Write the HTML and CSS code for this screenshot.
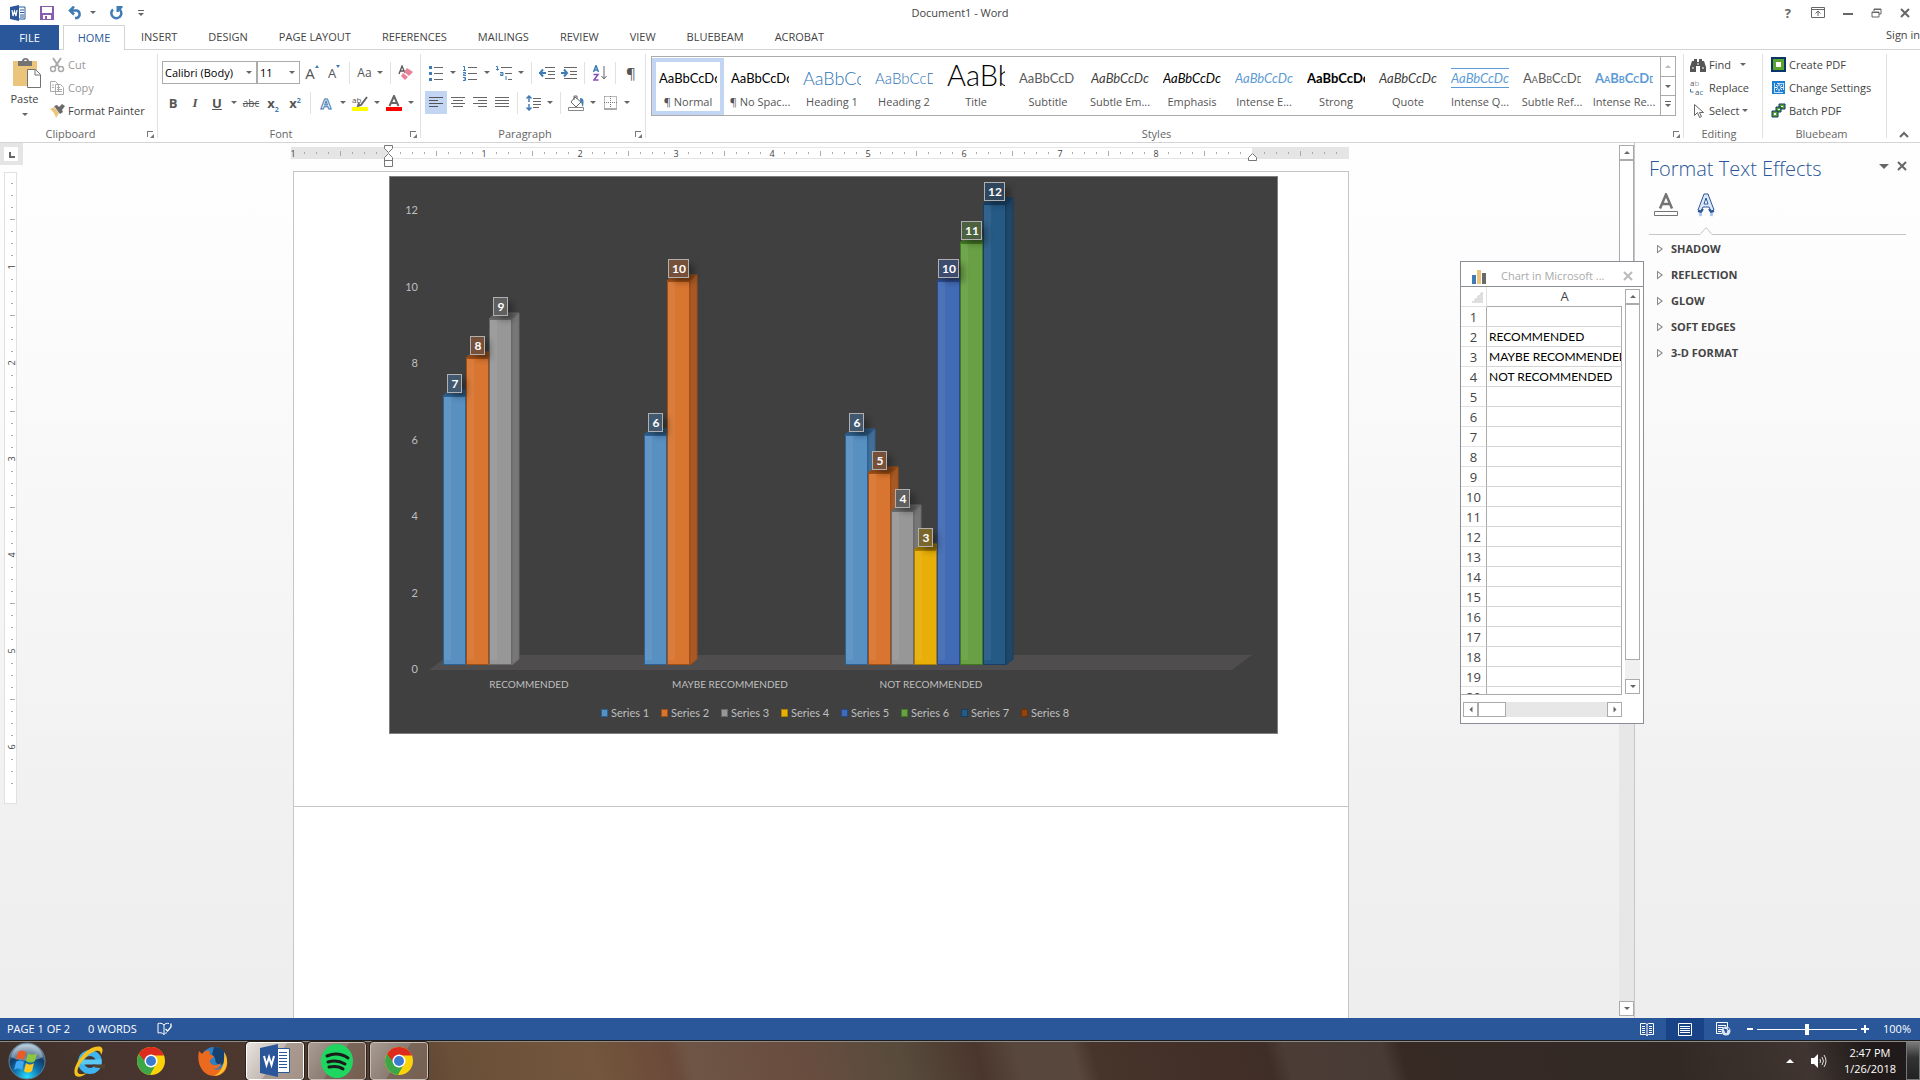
FILE: index.html
```
<!DOCTYPE html>
<html lang="en">
<head>
  <meta charset="UTF-8" />
  <title>Document1 - Word</title>
  <link rel="stylesheet" href="styles.css">
</head>
<body>
  <header class="titlebar">
    <div class="quick">
      <svg class="q-word" width="16" height="16" viewBox="0 0 16 16"><path d="M8 2h7v12H8" fill="#fff" stroke="#2a579a"/><path d="M10 5h4M10 7.500h4M10 10h4M10 12h4" stroke="#2a579a"/><path d="M0 2l9-2v16l-9-2z" fill="#2a579a"/><path d="M2 5l1 6 1.500-5L6 11l1-6" fill="none" stroke="#fff" stroke-width="1.200"/></svg>
      <button class="q-btn" aria-label="Save"><svg width="14" height="14" viewBox="0 0 14 14"><path d="M0 0h14v14H0z" fill="#8a5cb0"/><path d="M2 1h10v6H2zM3 9h8v4H3z" fill="#fff"/><path d="M5 10h2v4H5z" fill="#8a5cb0"/></svg></button>
      <button class="q-btn" aria-label="Undo"><svg width="15" height="14" viewBox="0 0 15 14"><path d="M1.500 4.500H9a4 4 0 0 1 0 7.500H7M6 .5l-4 4 4 4" fill="none" stroke="#3f7cb5" stroke-width="2.500"/></svg></button>
      <i class="arrow"></i>
      <button class="q-btn" aria-label="Redo"><svg width="15" height="14" viewBox="0 0 15 14"><path d="M9 2.500a5 5 0 1 1-5 1" fill="none" stroke="#3f7cb5" stroke-width="2.400"/><path d="M7.500 0h6v1.500L9.500 6h-2z" fill="#3f7cb5"/></svg></button>
      <button class="q-more" aria-label="Customize"><svg width="6" height="6" viewBox="0 0 6 6"><path d="M0 .5h6" stroke="#666"/><path d="M0 3h6L3 6z" fill="#666"/></svg></button>
    </div>
    <h1>Document1 - Word</h1>
    <div class="win-btns">
      <button aria-label="Help" class="help">?</button>
      <button aria-label="Ribbon display"><svg width="14" height="11" viewBox="0 0 14 11"><path d="M.5.5h13v10H.5zM1 2.500h12M7 9V4.500M4.500 6.500L7 4l2.500 2.500" fill="none" stroke="#666"/></svg></button>
      <button aria-label="Minimize"><svg width="10" height="11" viewBox="0 0 10 11"><path d="M0 7h10" stroke="#666" stroke-width="2"/></svg></button>
      <button aria-label="Restore"><svg width="11" height="10" viewBox="0 0 11 10"><path d="M3 3V1h7v5H8M1 4h7v5H1z" fill="none" stroke="#666"/><path d="M1 4.500h7M3 1.500h7" stroke="#666"/></svg></button>
      <button aria-label="Close"><svg width="10" height="10" viewBox="0 0 10 10"><path d="M1 1l8 8M9 1L1 9" stroke="#666" stroke-width="2"/></svg></button>
    </div>
  </header>

  <nav class="tabs">
    <button class="tab file">FILE</button>
    <button class="tab active">HOME</button>
    <button class="tab">INSERT</button>
    <button class="tab">DESIGN</button>
    <button class="tab">PAGE LAYOUT</button>
    <button class="tab">REFERENCES</button>
    <button class="tab">MAILINGS</button>
    <button class="tab">REVIEW</button>
    <button class="tab">VIEW</button>
    <button class="tab">BLUEBEAM</button>
    <button class="tab">ACROBAT</button>
    <a class="signin" href="#">Sign in</a>
  </nav>

  <section class="ribbon">
    <div class="group clipboard">
      <div class="content">
        <button class="paste">
          <svg width="30" height="31" viewBox="0 0 30 31"><path d="M1 3h24v25H1z" fill="#ecc57c"/><path d="M6 3h4c0-4 7-4 7 0h3v5H6z" fill="#737373"/><path d="M12 3a1.500 1.500 0 0 1 3 0" fill="#fff"/><path d="M15.500 11.500h8l5 5v13h-13z" fill="#fff" stroke="#737373"/><path d="M23 12v5h5" fill="none" stroke="#737373"/></svg>
          <span>Paste</span>
          <i class="arrow"></i>
        </button>
        <div class="list">
          <button class="item off"><svg width="16" height="16" viewBox="0 0 16 16"><path d="M4 1l6 9M12 1L6 10" stroke="#aaa" stroke-width="2"/><circle cx="4" cy="12" r="2.500" fill="none" stroke="#aaa" stroke-width="1.500"/><circle cx="12" cy="12" r="2.500" fill="none" stroke="#aaa" stroke-width="1.500"/></svg>Cut</button>
          <button class="item off"><svg width="16" height="16" viewBox="0 0 16 16"><path d="M1.500 1.500h5l3 3v7h-8zM6.500 4.500h5l3 3v7h-8z" fill="#fff" stroke="#aaa"/><path d="M3 5h2M3 7.500h2M8 9.500h5M8 11.500h5M8 7.500h3" stroke="#aaa"/></svg>Copy</button>
          <button class="item"><svg width="16" height="16" viewBox="0 0 16 16"><path d="M1 6l4-2 5 6-3 5c-1-4-3-7-6-9z" fill="#ecc57c"/><path d="M5 3l3-1 2 2 3-3 3 2-3 4 1 2-3 2z" fill="#6a6a6a"/></svg>Format Painter</button>
        </div>
      </div>
      <div class="label">Clipboard<i class="launch"></i></div>
    </div>

    <div class="group font">
      <div class="content rows">
        <div class="row">
          <span class="combo name"><select aria-label="Font"><option>Calibri (Body)</option></select><i class="arrow"></i></span>
          <span class="combo size"><select aria-label="Font size"><option>11</option></select><i class="arrow"></i></span>
          <button class="ib gap" aria-label="Grow font"><span class="g16">A</span><i class="up"></i></button>
          <button class="ib" aria-label="Shrink font"><span class="g14">A</span><i class="down"></i></button>
          <i class="sep"></i>
          <button class="ib wide"><span class="g13">Aa</span><i class="arrow"></i></button>
          <i class="sep"></i>
          <button class="ib" aria-label="Clear formatting"><svg width="16" height="16" viewBox="0 0 16 16"><path d="M1 9l3-8 3 7M2 6h4" fill="none" stroke="#555" stroke-width="1.300"/><path d="M9 3l6 4-4 4-5-4z" fill="#e8829a"/><path d="M5 8l5 4-3 3-4-4z" fill="#e8829a"/></svg></button>
        </div>
        <div class="row">
          <button class="ib"><b>B</b></button>
          <button class="ib"><b class="ital">I</b></button>
          <button class="ib"><b class="und">U</b></button>
          <i class="arrow cell"></i>
          <button class="ib"><s>abc</s></button>
          <button class="ib"><b>x<sub>2</sub></b></button>
          <button class="ib"><b>x<sup>2</sup></b></button>
          <i class="sep"></i>
          <button class="ib"><b class="fx">A</b></button><i class="arrow cell"></i>
          <button class="ib" aria-label="Highlight"><svg width="16" height="16" viewBox="0 0 16 16"><text x="0" y="8" class="ab">ab</text><path d="M15 2l-6 8-3 1 1-3" fill="none" stroke="#666" stroke-width="2"/><path d="M0 12h16v4H0z" fill="#ff0"/></svg></button><i class="arrow cell"></i>
          <button class="ib" aria-label="Font colour"><svg width="16" height="16" viewBox="0 0 16 16"><path d="M3.500 11L8 1l4.500 10M5 8h6" fill="none" stroke="#666" stroke-width="2"/><path d="M0 12h16v4H0z" fill="red"/></svg></button><i class="arrow cell"></i>
        </div>
      </div>
      <div class="label">Font<i class="launch"></i></div>
    </div>

    <div class="group para">
      <div class="content rows">
        <div class="row">
          <button class="ib" aria-label="Bullets"><svg width="14" height="16" viewBox="0 0 14 16"><path d="M0 1h3v3H0zM0 7h3v3H0zM0 13h3v3H0z" fill="#3f7cb5"/><path d="M5 2.500h9M5 8.500h9M5 14.500h9" stroke="#666"/></svg></button><i class="arrow cell"></i>
          <button class="ib" aria-label="Numbering"><svg width="14" height="16" viewBox="0 0 14 16"><path d="M0 1.500h1.500v4M0 5.500h3M0 7.500h2.500v1.500H.5v1.500H3M0 12.500h2.500v3H0M1 14h1.500" fill="none" stroke="#3f7cb5"/><path d="M5 2.500h9M5 8.500h9M5 14.500h9" stroke="#666"/></svg></button><i class="arrow cell"></i>
          <button class="ib" aria-label="Multilevel list"><svg width="16" height="16" viewBox="0 0 16 16"><path d="M0 1.500h1.500v4M0 4.500h3M4 7.500h3v3H4.500V9H7M10 11v4" fill="none" stroke="#3f7cb5"/><path d="M5 2.500h11M9 8.500h7M12 14.500h4" stroke="#666"/></svg></button><i class="arrow cell"></i>
          <i class="sep"></i>
          <button class="ib" aria-label="Decrease indent"><svg width="16" height="12" viewBox="0 0 16 12"><path d="M0 6h7M4 2.500L1 6l3 3.500" fill="none" stroke="#3f7cb5" stroke-width="2"/><path d="M6 .5h10M9 4.500h7M9 7.500h7M6 11.500h10" stroke="#666"/></svg></button>
          <button class="ib" aria-label="Increase indent"><svg width="16" height="12" viewBox="0 0 16 12"><path d="M0 6h6M3 2.500L6 6 3 9.500" fill="none" stroke="#3f7cb5" stroke-width="2"/><path d="M3 .5h13M9 4.500h7M9 7.500h7M3 11.500h13" stroke="#666"/></svg></button>
          <i class="sep"></i>
          <button class="ib" aria-label="Sort"><svg width="14" height="16" viewBox="0 0 14 16"><path d="M.5 7L3 .5 5.500 7M1.500 5h3" fill="none" stroke="#3f7cb5" stroke-width="1.500"/><path d="M.5 9.500H5L1 15h4.500" fill="none" stroke="#8a4fb5" stroke-width="1.500"/><path d="M11 1v12M8.500 11l2.500 3 2.500-3" fill="none" stroke="#666"/></svg></button>
          <i class="sep"></i>
          <button class="ib"><span class="g16">¶</span></button>
        </div>
        <div class="row">
          <button class="ib on" aria-label="Align left"><svg width="14" height="11" viewBox="0 0 14 11"><path d="M0 .5h14M0 3.500h9M0 6.500h14M0 9.500h9" stroke="#555"/></svg></button>
          <button class="ib" aria-label="Center"><svg width="14" height="11" viewBox="0 0 14 11"><path d="M0 .5h14M2 3.500h10M0 6.500h14M2 9.500h10" stroke="#666"/></svg></button>
          <button class="ib" aria-label="Align right"><svg width="14" height="11" viewBox="0 0 14 11"><path d="M0 .5h14M5 3.500h9M0 6.500h14M5 9.500h9" stroke="#666"/></svg></button>
          <button class="ib" aria-label="Justify"><svg width="14" height="11" viewBox="0 0 14 11"><path d="M0 .5h14M0 3.500h14M0 6.500h14M0 9.500h14" stroke="#666"/></svg></button>
          <i class="sep"></i>
          <button class="ib" aria-label="Line spacing"><svg width="15" height="16" viewBox="0 0 15 16"><path d="M3 1v6M3 9v6M.5 3.500L3 1l2.500 2.500M.5 12.500L3 15l2.500-2.500" fill="none" stroke="#3f7cb5" stroke-width="1.500"/><path d="M7 3.500h8M7 6.500h8M7 9.500h8M7 12.500h6" stroke="#666"/></svg></button><i class="arrow cell"></i>
          <i class="sep"></i>
          <button class="ib" aria-label="Shading"><svg width="17" height="16" viewBox="0 0 17 16"><path d="M7 2l6 5-5 5-5-5zM6 5V1h3v3" fill="none" stroke="#666"/><path d="M12 3c4 0 4 3 3 9-2-2-1-5-3-7z" fill="#3f7cb5"/><path d="M.5 12.500h15v3H.5z" fill="#fff" stroke="#888"/></svg></button><i class="arrow cell"></i>
          <button class="ib" aria-label="Borders"><svg width="13" height="14" viewBox="0 0 13 14"><path d="M.5.5h12v12M.5.5v12M6.500 0v12M0 6.500h13" fill="none" stroke="#777" stroke-dasharray="1 1"/><path d="M0 13h13" stroke="#555"/></svg></button><i class="arrow cell"></i>
        </div>
      </div>
      <div class="label">Paragraph<i class="launch"></i></div>
    </div>

    <div class="group styles">
      <div class="gallery">
        <div class="cards">
          <button class="card sel"><span class="pv">AaBbCcDc</span><span>¶ Normal</span></button>
          <button class="card"><span class="pv">AaBbCcDc</span><span>¶ No Spac...</span></button>
          <button class="card"><span class="pv h1p">AaBbCc</span><span>Heading 1</span></button>
          <button class="card"><span class="pv h2p">AaBbCcD</span><span>Heading 2</span></button>
          <button class="card"><span class="pv tp">AaBb</span><span>Title</span></button>
          <button class="card"><span class="pv subp">AaBbCcD</span><span>Subtitle</span></button>
          <button class="card"><span class="pv it">AaBbCcDc</span><span>Subtle Em...</span></button>
          <button class="card"><span class="pv it dark">AaBbCcDc</span><span>Emphasis</span></button>
          <button class="card"><span class="pv it blue">AaBbCcDc</span><span>Intense E...</span></button>
          <button class="card"><span class="pv bold">AaBbCcDc</span><span>Strong</span></button>
          <button class="card"><span class="pv it">AaBbCcDc</span><span>Quote</span></button>
          <button class="card"><span class="pv it blue lines">AaBbCcDc</span><span>Intense Q...</span></button>
          <button class="card"><span class="pv caps">AaBbCcDd</span><span>Subtle Ref...</span></button>
          <button class="card"><span class="pv caps blue bold">AaBbCcDd</span><span>Intense Re...</span></button>
        </div>
        <div class="gal-nav">
          <button aria-label="Previous row"><i class="arrow flip dim"></i></button>
          <button aria-label="Next row"><i class="arrow"></i></button>
          <button aria-label="More"><i class="arrow bar"></i></button>
        </div>
      </div>
      <div class="label">Styles<i class="launch"></i></div>
    </div>

    <div class="group editing">
      <div class="content list">
        <button class="item"><svg width="16" height="14" viewBox="0 0 16 14"><path d="M2 3h2V1h3v3h2V1h3v2h2l2 6v5h-6V8H6v6H0V9z" fill="#555"/><path d="M2 10h2M12 10h2M7 6h2" stroke="#fff"/></svg>Find<i class="arrow far"></i></button>
        <button class="item"><svg width="16" height="16" viewBox="0 0 16 16"><text x="0" y="6" class="ab">a<tspan fill="#aaa">b</tspan></text><text x="5" y="15" class="ab">a<tspan fill="#3f7cb5">c</tspan></text><path d="M.5 9v3h3" fill="none" stroke="#3f7cb5"/></svg>Replace</button>
        <button class="item"><svg width="16" height="16" viewBox="0 0 16 16"><path d="M4.500 1.500v11l3-3 2 5 2-1-2-4h4z" fill="#fff" stroke="#666"/></svg>Select<i class="arrow"></i></button>
      </div>
      <div class="label">Editing</div>
    </div>

    <div class="group bluebeam">
      <div class="content list">
        <button class="item"><svg width="15" height="15" viewBox="0 0 15 15"><path d="M0 0h15v15H0z" fill="#0b3468"/><path d="M2 2h11v11H2z" fill="#5aa52e"/><path d="M5 5h5v5H5z" fill="#fff"/></svg>Create PDF</button>
        <button class="item"><svg width="15" height="15" viewBox="0 0 15 15"><path d="M1 1h13v13H1z" fill="#1e7fd0"/><path d="M3.500 3v9M3 12.500h9M6 3.500h6M12.500 3v7" stroke="#bfe0ff" fill="none"/><path d="M8 3.500v8M4 7.500h8M5 5l6 5M11 5l-6 5" stroke="#fff"/><circle cx="8" cy="7.500" r="1.500" fill="#1e7fd0"/></svg>Change Settings</button>
        <button class="item"><svg width="15" height="15" viewBox="0 0 15 15"><g fill="#fff" stroke="#0b3468"><path d="M8 1h6v5H8z" fill="#5aa52e"/><path d="M5 4h5v5H5z" fill="#5aa52e"/><path d="M1 8h6v6H1z" fill="#5aa52e"/></g><path d="M3 10h2v2H3zM7 6h2v1H7zM10 3h2v1h-2z" fill="#fff"/></svg>Batch PDF</button>
      </div>
      <div class="label">Bluebeam</div>
    </div>
    <div class="collapse"><button aria-label="Collapse ribbon"><svg width="10" height="7" viewBox="0 0 10 7"><path d="M1 6l4-4 4 4" fill="none" stroke="#666" stroke-width="2"/></svg></button></div>
  </section>

  <main class="work">
    <div class="vside">
      <button class="tabsel" aria-label="Tab selector"><svg width="14" height="14" viewBox="0 0 14 14"><path d="M0 0h14v14H0z" fill="#fff"/><path d="M6 5v5h5" fill="none" stroke="#666" stroke-width="2"/></svg></button>
      <svg id="vruler" width="13" height="632"></svg>
    </div>
    <div class="canvas">
      <svg id="hruler" width="1060" height="28"></svg>
      <div class="page first">
        <svg id="chart" width="889" height="558" viewBox="389 176 889 558" role="img" aria-label="Chart"></svg>
      </div>
      <div class="page rest"></div>
    </div>
    <div class="vscroll">
      <button aria-label="Scroll up"><i class="arrow flip"></i></button>
      <div class="thumb"></div>
      <button class="end" aria-label="Scroll down"><i class="arrow"></i></button>
    </div>

    <aside class="pane">
      <div class="pane-head">
        <h2>Format Text Effects</h2>
        <button aria-label="Pane options"><i class="arrow big"></i></button>
        <button aria-label="Close pane"><svg width="10" height="10" viewBox="0 0 10 10"><path d="M1 1l8 8M9 1L1 9" stroke="#666" stroke-width="2"/></svg></button>
      </div>
      <div class="pane-tabs">
        <button aria-label="Text fill and outline"><svg width="24" height="24" viewBox="0 0 24 24"><path d="M6 15.500L12 1.500l6 14M8 11h8" fill="none" stroke="#737373" stroke-width="2.500"/><path d="M.5 18.500h23v4H.5z" fill="#fff" stroke="#737373"/></svg></button>
        <button aria-label="Text effects"><svg width="18" height="24" viewBox="0 0 18 24"><path d="M1 17L7 1h4l6 16-3 1-2-4H6l-2 4zM9 5l-2 6h4z" fill="#dce8f8" stroke="#2a579a"/><path d="M1 18l3 1 2-3M17 18l-3 1-2-3" fill="none" stroke="#2a579a" stroke-width="2"/><path d="M3 20l1 3M15 20l-1 3" stroke="#a9c4e8" stroke-width="3"/></svg></button>
      </div>
      <svg class="notch" width="100%" height="9"><path d="M0 8.500h51l6-7 6 7" fill="none" stroke="#c6c6c6"/><path d="M63 8.500h194" stroke="#c6c6c6"/></svg>
      <div class="sections">
        <button><i class="tri"></i>SHADOW</button>
        <button><i class="tri"></i>REFLECTION</button>
        <button><i class="tri"></i>GLOW</button>
        <button><i class="tri"></i>SOFT EDGES</button>
        <button><i class="tri"></i>3-D FORMAT</button>
      </div>
    </aside>

    <div class="sheet">
      <div class="sheet-title">
        <svg width="15" height="15" viewBox="0 0 15 15"><path d="M0 6h4v9H0z" fill="#3f7cb5"/><path d="M5 1h4v14H5z" fill="#ecc57c"/><path d="M10 4h4v11h-4z" fill="#6a6a6a"/></svg>
        <span>Chart in Microsoft ...</span>
        <button aria-label="Close chart data"><svg width="10" height="10" viewBox="0 0 10 10"><path d="M1 1l8 8M9 1L1 9" stroke="#bbb" stroke-width="2"/></svg></button>
      </div>
      <div class="sheet-body">
        <div class="cells">
          <table>
            <thead><tr><th class="corner"></th><th class="col">A</th></tr></thead>
            <tbody id="rows"></tbody>
          </table>
        </div>
        <div class="vscroll small">
          <button aria-label="Scroll up"><i class="arrow flip"></i></button>
          <div class="thumb"></div>
          <button class="end" aria-label="Scroll down"><i class="arrow"></i></button>
        </div>
      </div>
      <div class="hscroll">
        <button aria-label="Scroll left"><i class="arrow left"></i></button>
        <div class="thumb"></div>
        <button class="end" aria-label="Scroll right"><i class="arrow right"></i></button>
      </div>
    </div>
  </main>

  <footer class="status">
    <span>PAGE 1 OF 2</span>
    <span>0 WORDS</span>
    <svg width="15" height="14" viewBox="0 0 15 14"><path d="M7 12.500V3C5 1 3 1 1 1.500v9.500c2-.5 4-.5 6 1.500 1-1.500 2-1.700 3-1.700M7 3c1-1.500 3-2 5-1.500" fill="none" stroke="#fff"/><path d="M8.500 7l2 2 3.500-4V1.500" fill="none" stroke="#fff" stroke-width="1.300"/></svg>
    <div class="views">
      <button aria-label="Read mode"><svg width="14" height="13" viewBox="0 0 14 13"><path d="M.5.5h5l1.500 1 1.500-1h5v11h-5L7 12.500 5.500 11.500h-5zM7 1v12M2 3.500h3M2 5.500h3M2 7.500h3M2 9.500h3M9 3.500h3M9 5.500h3M9 7.500h3M9 9.500h3" fill="none" stroke="#fff"/></svg></button>
      <button class="on" aria-label="Print layout"><svg width="14" height="13" viewBox="0 0 14 13"><path d="M.5.5h13v12H.5zM2 3.500h10M2 5.500h10M2 7.500h10M2 9.500h10" fill="none" stroke="#fff"/></svg></button>
      <button aria-label="Web layout"><svg width="15" height="14" viewBox="0 0 15 14"><path d="M6 11.500H.5V.5h11V5M2 3.500h8M2 5.500h5M2 7.500h4M2 9.500h3" fill="none" stroke="#fff"/><circle cx="10" cy="9" r="4.500" fill="#dce6f5"/><path d="M8 7l3 1-1 3zM12 6l1 2" fill="#2a579a" stroke="#2a579a"/></svg></button>
    </div>
    <div class="zoom">
      <button aria-label="Zoom out"><svg width="6" height="10" viewBox="0 0 6 10"><path d="M0 5h6" stroke="#fff" stroke-width="2"/></svg></button>
      <input type="range" min="0" max="100" value="50" aria-label="Zoom">
      <button aria-label="Zoom in"><svg width="8" height="10" viewBox="0 0 8 10"><path d="M0 5h8M4 1v8" stroke="#fff" stroke-width="2"/></svg></button>
      <span>100%</span>
    </div>
  </footer>

  <div class="taskbar">
    <button class="task start" aria-label="Start"><svg width="38" height="38" viewBox="0 0 38 38">
      <defs><radialGradient id="orb" cx=".5" cy=".95" r=".9"><stop offset="0" stop-color="#27e0ff"/><stop offset=".4" stop-color="#1273ad"/><stop offset=".7" stop-color="#0f3c66"/><stop offset="1" stop-color="#9db6c8"/></radialGradient></defs>
      <circle cx="19" cy="19" r="18" fill="url(#orb)" stroke="#5f7f96"/>
      <path d="M3 15a16.500 16.500 0 0 1 32 0c-9 5-23 5-32 0z" fill="#fff" opacity=".35"/>
      <path d="M10 10c3-2 5-2 8 0l-2 8c-3-2-5-2-8 0z" fill="#ee5a24"/><path d="M20 11c3 2 6 2 9 0l-2 8c-3 2-6 2-9 0z" fill="#8cc63f"/><path d="M8 20c3-2 5-2 8 0l-2 8c-3-2-5-2-8 0z" fill="#3fa9f5"/><path d="M18 21c3 2 5 2 8 0l-2 8c-3 2-5 2-8 0z" fill="#ffc81e"/></svg></button>
    <button class="task" aria-label="Internet Explorer"><svg width="32" height="34" viewBox="0 0 32 34"><circle cx="17" cy="18" r="9" fill="none" stroke="#3fb4ee" stroke-width="6"/><path d="M8 15.500h20v5H8z" fill="#5cc8f5"/><path d="M20 20.500h12v4l-10-1z" fill="#54402f"/><path d="M3 32C-4 26 14-1 28 3c3 2 1 6 0 8 0-4-2-5-6-4C12 11 2 25 5 29c2 2 6 1 9 0-4 3-8 5-11 3z" fill="#f6c31c"/></svg></button>
    <button class="task" aria-label="Chrome"><svg width="30" height="30" viewBox="0 0 30 30"><circle cx="15" cy="15" r="14" fill="#fcd209"/><path d="M2.900 8A14 14 0 0 1 28 9.500H15L9 18z" fill="#dd2c1e"/><path d="M2.900 8A14 14 0 0 0 14 29l6-11h-9z" fill="#3da648"/><circle cx="15" cy="15" r="6.500" fill="#fff"/><circle cx="15" cy="15" r="5" fill="#3a7bd0"/></svg></button>
    <button class="task" aria-label="Firefox"><svg width="32" height="34" viewBox="0 0 32 34"><circle cx="17" cy="16" r="13" fill="#2f7fc4"/><path d="M17 3c8 0 12 5 12 11s-5 8-8 6c-5-2 0-6-6-9z" fill="#16406f"/><path d="M2 7l3 3c2-3 5-4 8-3-2 3 2 5 4 5-1 3-5 3-4 6 2 5 9 3 11 1-1 5-6 7-9 5 7 5 15-2 13-14 5 9 2 22-11 22C6 32-1 20 2 7z" fill="#ec6a1e"/><path d="M27 8c6 9 3 23-10 24 8-4 11-12 10-24z" fill="#fbc12d"/></svg></button>
    <button class="task win current" aria-label="Word"><svg width="31" height="33" viewBox="0 0 31 33"><path d="M15 4.500h14.500v24H15" fill="#fff" stroke="#2a579a"/><path d="M19 8.500h8M19 11.500h8M19 14.500h8M19 17.500h8M19 20.500h8M19 23.500h8" stroke="#2a579a"/><path d="M0 4l18-4v33L0 29z" fill="#2a579a"/><path d="M4 12l2.500 9L9 13l2.500 8L14 12" fill="none" stroke="#fff" stroke-width="2"/></svg></button>
    <button class="task win" aria-label="Spotify"><svg width="32" height="34" viewBox="0 0 32 34"><ellipse cx="16" cy="17" rx="16" ry="17" fill="#1ed760"/><path d="M6 12c7-3 15-2 21 2M7 18c6-2 12-1 17 2M8 23c5-1 10-1 14 2" fill="none" stroke="#1b1b1b" stroke-width="3" stroke-linecap="round"/></svg></button>
    <button class="task win" aria-label="Chrome window"><svg width="30" height="30" viewBox="0 0 30 30"><circle cx="15" cy="15" r="14" fill="#fcd209"/><path d="M2.900 8A14 14 0 0 1 28 9.500H15L9 18z" fill="#dd2c1e"/><path d="M2.900 8A14 14 0 0 0 14 29l6-11h-9z" fill="#3da648"/><circle cx="15" cy="15" r="6.500" fill="#fff"/><circle cx="15" cy="15" r="5" fill="#3a7bd0"/></svg></button>
    <div class="tray">
      <i class="arrow flip white"></i>
      <svg width="16" height="14" viewBox="0 0 16 14"><path d="M0 4h3l4-4v14l-4-4H0z" fill="#fff"/><path d="M9 5q1 2 0 4M11 3q3 4 0 8M13 1q4 6 0 12" fill="none" stroke="#ddd"/></svg>
      <div class="clock"><span>2:47 PM</span><span>1/26/2018</span></div>
      <button class="peek" aria-label="Show desktop"></button>
    </div>
  </div>

  <script src="app.js"></script>
</body>
</html>
```
FILE: styles.css
```
* {
  box-sizing: border-box;
}

body {
  margin: 0;
  height: 100vh;
  display: flex;
  flex-direction: column;
  overflow: hidden;
  font-family: "Open Sans", "Noto Sans", sans-serif;
  font-size: 11px;
  line-height: 16px;
  color: #444;
  background: #fff;
}

button {
  margin: 0;
  padding: 0;
  border: 0;
  background: none;
  font: inherit;
  color: inherit;
}

h1, h2 {
  margin: 0;
  font-weight: 400;
}

svg {
  display: block;
  flex: none;
}

/* small arrows used all over the ribbon */
.arrow {
  flex: none;
  width: 0;
  height: 0;
  border: 3px solid transparent;
  border-top-color: #666;
  border-bottom: 0;
}

.arrow.flip {
  transform: rotate(180deg);
}

.arrow.left {
  transform: rotate(90deg);
}

.arrow.right {
  transform: rotate(270deg);
}

.arrow.dim {
  border-top-color: #bbb;
}

.arrow.white {
  border-width: 4px;
  border-bottom: 0;
  border-top-color: #fff;
}

.arrow.big {
  display: block;
  border-width: 5px;
  border-bottom: 0;
}

.arrow.cell {
  margin: 0 3px;
}

.arrow.far {
  margin-left: 6px;
}

.arrow.bar {
  position: relative;
}

.arrow.bar::before {
  content: "";
  position: absolute;
  left: -3px;
  top: -6px;
  width: 6px;
  height: 1px;
  background: #666;
}

/* title bar */
.titlebar {
  display: grid;
  grid-template-columns: 1fr auto 1fr;
  align-items: center;
  height: 25px;
  flex: none;
}

.titlebar h1 {
  font-size: 11px;
}

.quick {
  display: flex;
  align-items: center;
  padding-left: 10px;
}

.q-btn {
  margin-left: 14px;
}

.quick .arrow {
  margin: 0 -1px 0 7px;
}

.q-more {
  margin-left: 14px;
}

.win-btns {
  display: flex;
  justify-content: flex-end;
  align-items: center;
  gap: 18px;
  padding-right: 10px;
}

.help {
  margin-right: 2px;
  font-size: 13px;
  font-weight: 700;
  color: #666;
}

.tabs {
  display: flex;
  gap: 1px;
  height: 25px;
  flex: none;
  border-bottom: 1px solid #d4d4d4;
}

.tab {
  padding: 0 15px;
  height: 24px;
}

.tab.file {
  width: 59px;
  height: 25px;
  margin-right: 3px;
  padding: 0;
  color: #fff;
  background: #2a579a;
}

.tab.active {
  height: 25px;
  width: 62px;
  padding: 0;
  border: 1px solid #d4d4d4;
  border-bottom: 0;
  background: #fff;
  color: #2a579a;
}

.signin {
  margin-left: auto;
  padding-top: 2px;
  color: inherit;
  text-decoration: none;
}

/* ribbon */
.ribbon {
  display: flex;
  height: 93px;
  flex: none;
  padding: 4px 0;
  border-bottom: 1px solid #d4d4d4;
}

.group {
  display: flex;
  flex-direction: column;
  border-right: 1px solid #e1e1e1;
}

.content {
  flex: 1;
}

.label {
  position: relative;
  height: 12px;
  line-height: 15px;
  padding-right: 16px;
  text-align: center;
  color: #666;
}

.launch {
  position: absolute;
  right: 4px;
  top: 5px;
  width: 6px;
  height: 6px;
  border: 1px solid #777;
  border-right: 0;
  border-bottom: 0;
}

.launch::after {
  content: "";
  position: absolute;
  left: 2px;
  top: 2px;
  border: 2px solid #777;
  border-top-color: transparent;
  border-left-color: transparent;
}

.clipboard {
  width: 158px;
}

.clipboard .content {
  display: flex;
}

.paste {
  width: 49px;
  display: flex;
  flex-direction: column;
  align-items: center;
  padding-top: 4px;
}

.paste svg {
  margin-left: 4px;
}

.paste .arrow {
  margin-top: 6px;
}

.paste span {
  margin-top: 2px;
}

.list {
  display: flex;
  flex-direction: column;
  margin-top: -1px;
}

.item {
  display: flex;
  align-items: center;
  gap: 3px;
  height: 23px;
}

.item.off {
  color: #999;
}

.font {
  width: 263px;
}

.para {
  width: 225px;
}

.rows {
  display: flex;
  flex-direction: column;
  gap: 7px;
  padding: 7px 3px 0 4px;
}

.row {
  display: flex;
  align-items: center;
  height: 23px;
}

.combo {
  display: flex;
  align-items: center;
  height: 23px;
  border: 1px solid #ababab;
  padding-right: 4px;
}

.combo select {
  appearance: none;
  flex: 1;
  min-width: 0;
  border: 0;
  padding: 0 0 0 2px;
  background: none;
  font: inherit;
  color: #000;
}

.name {
  width: 95px;
}

.size {
  width: 43px;
}

.ib {
  display: flex;
  align-items: center;
  justify-content: center;
  width: 22px;
  height: 23px;
  font-size: 13px;
  color: #555;
}

.ib.on {
  background: #c2d5f2;
}

.ib.gap {
  margin-left: 1px;
}

.ib.wide {
  width: 32px;
  gap: 5px;
}

.ib sub, .ib sup {
  font-size: 7px;
  line-height: 0;
  color: #3f7cb5;
}

.ib s {
  font-size: 10px;
}

.ital {
  font-family: "Liberation Serif", serif;
  font-style: italic;
}

.und {
  text-decoration: underline;
}

.fx {
  font-size: 15px;
  color: #fff;
  -webkit-text-stroke: 1px #3f7cb5;
}

.g16 {
  font-size: 15px;
}

.g14 {
  font-size: 13px;
}

.g13 {
  font-size: 12px;
}

.up, .down {
  align-self: flex-start;
  margin-top: 4px;
  border: 2px solid transparent;
  border-bottom: 3px solid #3f7cb5;
  border-top: 0;
}

.down {
  border-top: 3px solid #3f7cb5;
  border-bottom: 0;
}

.sep {
  width: 1px;
  height: 22px;
  margin: 0 4px;
  background: #e1e1e1;
}

.ab {
  font-size: 8px;
  fill: #555;
}

/* styles gallery */
.styles {
  flex: 1;
  min-width: 0;
  justify-content: space-between;
  padding: 2px 0 0 5px;
}

.styles .label {
  margin-left: -5px;
}

.gallery {
  display: flex;
  height: 60px;
  margin-right: 7px;
  border: 1px solid #ababab;
}

.cards {
  display: flex;
  flex: 1;
  min-width: 0;
  overflow: hidden;
}

.card {
  flex: none;
  width: 72px;
  height: 57px;
  margin-top: 1px;
  display: flex;
  flex-direction: column;
  align-items: center;
  border: 4px solid transparent;
  color: #555;
}

.card.sel {
  border-color: #c2d5f2;
}

.pv {
  width: 58px;
  height: 32px;
  line-height: 32px;
  overflow: hidden;
  white-space: nowrap;
  text-align: left;
  font-family: Lato, sans-serif;
  font-size: 13px;
  color: #000;
}

.h1p {
  font-size: 18px;
  font-weight: 300;
  color: #2e74b5;
}

.h2p {
  font-size: 15px;
  font-weight: 300;
  color: #2e74b5;
}

.tp {
  font-size: 29px;
  font-weight: 300;
  line-height: 26px;
}

.subp {
  color: #5a5a5a;
}

.it {
  font-style: italic;
  color: #404040;
}

.dark {
  color: #000;
}

.bold {
  font-weight: 700;
}

.caps {
  font-variant: small-caps;
  color: #5a5a5a;
}

.blue {
  color: #5b9bd5;
}

.pv.lines {
  height: 20px;
  line-height: 18px;
  margin: 6px 0;
  border-top: 1px solid #5b9bd5;
  border-bottom: 1px solid #5b9bd5;
}

.gal-nav {
  width: 15px;
  display: flex;
  flex-direction: column;
  border-left: 1px solid #ababab;
}

.gal-nav button {
  flex: 1;
  display: flex;
  align-items: center;
  justify-content: center;
}

.gal-nav button + button {
  border-top: 1px solid #ababab;
}

.editing {
  width: 79px;
  padding-left: 6px;
}

.bluebeam {
  width: 124px;
  padding-left: 8px;
}

.editing .label, .bluebeam .label {
  padding-right: 14px;
}

.collapse {
  width: 33px;
  display: flex;
  align-items: flex-end;
  justify-content: center;
}

/* document area */
.work {
  position: relative;
  flex: 1;
  min-height: 0;
  display: flex;
  background: linear-gradient(#fefefe, #fefefe 50px, #f0f0f0 700px, #eee);
}

.vside {
  width: 23px;
  overflow: hidden;
}

.tabsel {
  width: 23px;
  height: 22px;
  display: block;
  padding: 4px;
  background: #e5e5e5;
}

#vruler {
  margin: 7px 0 0 4px;
}

.canvas {
  flex: 1;
  min-width: 0;
  display: flex;
  flex-direction: column;
  align-items: center;
}

.page {
  width: 1056px;
  background: #fff;
  border: 1px solid #c6c6c6;
}

.page.first {
  height: 636px;
  flex: none;
  padding: 4px 0 0 95px;
}

.page.rest {
  flex: 1;
  border-top: 0;
  border-bottom: 0;
}

.ruler-num {
  font-size: 9px;
  fill: #444;
  text-anchor: middle;
}

.vscroll {
  width: 15px;
  margin: 2px 0;
  display: flex;
  flex-direction: column;
  background: #e7e7e7;
}

.vscroll button, .hscroll button {
  flex: none;
  width: 15px;
  height: 15px;
  display: flex;
  align-items: center;
  justify-content: center;
  border: 1px solid #ababab;
  background: #fff;
}

.vscroll .thumb {
  height: 440px;
  border: 1px solid #ababab;
  background: #fff;
}

.vscroll .end {
  margin-top: auto;
}

/* task pane */
.pane {
  width: 286px;
  border-left: 1px solid #c6c6c6;
  padding: 8px 14px 0 14px;
}

.pane-head {
  display: flex;
  align-items: flex-start;
  height: 41px;
  padding-top: 3px;
}

.pane-head h2 {
  flex: 1;
  font-size: 20px;
  line-height: 30px;
  font-weight: 300;
  color: #2a579a;
}

.pane-head button {
  display: flex;
  align-items: center;
  height: 10px;
  margin: 7px 0 0 8px;
}

.pane-head button:last-child {
  margin-right: -1px;
}

.pane-tabs {
  display: flex;
  align-items: flex-start;
  gap: 19px;
  height: 34px;
  padding: 1px 5px 0;
}

.sections {
  padding: 1px 0 0 8px;
}

.sections button {
  display: flex;
  align-items: center;
  gap: 8px;
  height: 26px;
  font-weight: 700;
}

.tri {
  width: 6px;
  height: 9px;
  background: #888;
  clip-path: polygon(0 0, 100% 50%, 0 100%, 0 0, 17% 22%, 17% 78%, 70% 50%, 17% 22%);
}

/* floating chart data window */
.sheet {
  position: absolute;
  right: 276px;
  top: 118px;
  width: 184px;
  height: 463px;
  display: flex;
  flex-direction: column;
  border: 1px solid #8a8f96;
  background: #fff;
}

.sheet-title {
  display: flex;
  align-items: center;
  height: 25px;
  flex: none;
  padding: 4px 10px 0 11px;
  border-bottom: 1px solid #8a8f96;
  color: #aaa;
}

.sheet-title span {
  flex: 1;
  padding-left: 14px;
}

.sheet-body {
  display: flex;
  justify-content: space-between;
  height: 408px;
  padding-right: 3px;
}

.sheet .small {
  margin: 2px 0 1px;
  background: #f0f0f0;
}

.sheet .small .thumb {
  height: 356px;
}

.cells {
  width: 161px;
  overflow: hidden;
  border-bottom: 1px solid #ababab;
}

.cells table {
  width: 161px;
  border-collapse: separate;
  border-spacing: 0;
  table-layout: fixed;
}

.cells th {
  padding: 0;
  height: 20px;
  font-weight: 400;
  font-size: 13px;
  color: #444;
  border-right: 1px solid #ababab;
  border-bottom: 1px solid #e1e1e1;
}

.cells thead th {
  height: 20px;
  line-height: 15px;
  border-right: 0;
  border-bottom: 1px solid #ababab;
}

.cells thead .corner {
  width: 26px;
  border-right: 1px solid #e1e1e1;
  border-bottom-color: #e1e1e1;
  background: linear-gradient(135deg, transparent 50%, #dedede 50%) 10px 4px / 12px 12px no-repeat;
}

.cells thead .col {
  padding-left: 20px;
}

.cells td {
  padding: 0 0 0 2px;
  height: 20px;
  overflow: hidden;
  white-space: nowrap;
  font-family: Lato, sans-serif;
  font-size: 12px;
  color: #000;
  border-right: 1px solid #ababab;
  border-bottom: 1px solid #d4d4d4;
}

.hscroll {
  display: flex;
  width: 159px;
  margin: 7px 0 0 2px;
  background: #e7e7e7;
}

.hscroll .thumb {
  width: 28px;
  border: 1px solid #ababab;
  background: #fff;
}

.hscroll .end {
  margin-left: auto;
}

/* chart */
.axis {
  font-family: Lato, sans-serif;
  font-size: 11px;
  fill: #bfbfbf;
}

.mid {
  font-size: 10px;
  text-anchor: middle;
}

.right {
  text-anchor: end;
}

.val {
  font-family: Lato, sans-serif;
  font-size: 12px;
  font-weight: 700;
  fill: #fff;
  text-anchor: middle;
}

/* status bar */
.status {
  display: flex;
  align-items: center;
  height: 22px;
  flex: none;
  padding-left: 7px;
  gap: 18px;
  color: #fff;
  background: #2a579a;
}

.status > svg {
  margin-left: 2px;
}

.views {
  display: flex;
  margin-left: auto;
  height: 22px;
}

.views button {
  width: 38px;
  display: flex;
  align-items: center;
  justify-content: center;
}

.views .on {
  background: #184487;
}

.zoom {
  display: flex;
  align-items: center;
  gap: 4px;
  margin-left: -13px;
  padding-right: 9px;
}

.zoom span {
  padding-left: 10px;
}

.zoom input {
  appearance: none;
  width: 100px;
  height: 11px;
  margin: 0;
  background: linear-gradient(#fff, #fff) 0 5px / 100% 1px no-repeat;
}

.zoom input::-webkit-slider-thumb {
  appearance: none;
  width: 4px;
  height: 11px;
  background: #fff;
}

/* windows taskbar */
.taskbar {
  display: flex;
  align-items: center;
  height: 40px;
  flex: none;
  border-top: 1px solid #1d1d1d;
  box-shadow: inset 0 1px 0 #8b8b8b;
  background: linear-gradient(75deg, #40302a 0, #4a3630 8%, #4f392e 18%, #6b5039 24%, #73563d 31%, #6b4a3a 35%, #6f5545 36%, #684d3f 42%, #574b3c 47%, #4a362d 51%, #58473c 53%, #58473c 56%, #47342b 57%, #3f2e27 66%, #4b3d36 67%, #483a34 72%, #372a25 73%, #322925 87%, #403530 94%, #201b1a 97%);
}

.task {
  width: 62px;
  height: 38px;
  display: flex;
  align-items: center;
  justify-content: center;
}

.task.start {
  width: 58px;
  padding-right: 4px;
}

.task.win {
  width: 58px;
  margin-right: 4px;
  border: 1px solid #c8bfb8;
  border-radius: 3px;
  outline: 1px solid #2a211d;
  background: linear-gradient(125deg, #a89c94 0, #8b7b70 49%, #7a665a 50%, #765f50 100%);
}

.task.start + .task + .task + .task {
  margin-right: 2px;
}

.task.current {
  border-color: #fff;
  background: linear-gradient(125deg, #e8e2de 0, #c4b9b2 49%, #aa9a90 50%, #a39287 100%);
}

.tray {
  display: flex;
  align-items: center;
  height: 100%;
  margin-left: auto;
  gap: 17px;
  color: #fff;
}

.clock {
  display: flex;
  flex-direction: column;
  text-align: center;
}

.peek {
  width: 14px;
  height: 38px;
  margin-left: -7px;
  border: 1px solid #777;
  background: linear-gradient(#777, #333 40%, #222);
}
```
FILE: app.js
```
const NS = 'http://www.w3.org/2000/svg';

function draw(parent, tag, attrs, text) {
  const el = document.createElementNS(NS, tag);
  for (const key in attrs) el.setAttribute(key, attrs[key]);
  if (text !== undefined) el.textContent = text;
  parent.appendChild(el);
  return el;
}

// horizontal ruler, 96px to the inch, origin at the left margin
const h = document.getElementById('hruler');
draw(h, 'rect', { x: 0, y: 4, width: 1058, height: 12, fill: '#e5e5e5' });
draw(h, 'rect', { x: 97, y: 5, width: 864, height: 10, fill: '#fff' });
for (let i = -8; i <= 79; i++) {
  const x = 97 + i * 12;
  if (i === 0 || i === 72) continue;
  if (i % 8 === 0) draw(h, 'text', { x: Math.max(x, 2), y: 14, class: 'ruler-num' }, Math.abs(i / 8));
  else if (i % 4 === 0) draw(h, 'rect', { x, y: 8, width: 1, height: 5, fill: '#aaa' });
  else draw(h, 'rect', { x, y: 9, width: 1, height: 2, fill: '#aaa' });
}
draw(h, 'path', { d: 'M93.5 2.500h8v3l-4 4-4-4zM93.500 14.500l4-4 4 4v9h-8zM93.500 17.500h8', fill: '#fff', stroke: '#777' });
draw(h, 'path', { d: 'M957.5 17.500v-3l4-4 4 4v3z', fill: '#fff', stroke: '#777' });

// vertical ruler
const v = document.getElementById('vruler');
draw(v, 'rect', { x: 0.5, y: 0.5, width: 12, height: 631, fill: '#fff', stroke: '#e1e1e1' });
for (let i = 1; i <= 51; i++) {
  const y = i * 12 - 1;
  if (i % 8 === 0) draw(v, 'text', { x: 0, y: 0, class: 'ruler-num', transform: `translate(11 ${y}) rotate(-90)` }, i / 8);
  else if (i % 4 === 0) draw(v, 'rect', { x: 6, y, width: 5, height: 1, fill: '#aaa' });
  else draw(v, 'rect', { x: 7, y, width: 2, height: 1, fill: '#aaa' });
}

// chart data sheet
const names = { 2: 'RECOMMENDED', 3: 'MAYBE RECOMMENDED', 4: 'NOT RECOMMENDED' };
const rows = document.getElementById('rows');
for (let i = 1; i <= 20; i++) {
  const row = document.createElement('tr');
  row.innerHTML = `<th>${i}</th><td>${names[i] || ''}</td>`;
  rows.appendChild(row);
}

// front, edge, side, top, label
const series = [
  ['#5890c2', '#2b6296', '#436f97', '#2d5578', '#41586f'],
  ['#d87530', '#a04e14', '#a85925', '#8c4717', '#77503a'],
  ['#979797', '#6a6a6a', '#777777', '#606060', '#5f5f5f'],
  ['#e8af08', '#a87d00', '#a87d00', '#8f6e00', '#7a652a'],
  ['#416bb4', '#284a8c', '#2e4c80', '#2e4478', '#3d4c6e'],
  ['#69a045', '#3f7a1e', '#4a7530', '#3f6a28', '#4b613f'],
  ['#255a85', '#163f66', '#1f4768', '#1b4263', '#30465c'],
  ['#91430f', '#6b3008', '#6b3008', '#5a2806', '#5a2806']
];

const groups = [
  { x: 443, name: 'RECOMMENDED', values: [7, 8, 9] },
  { x: 644, name: 'MAYBE RECOMMENDED', values: [6, 10] },
  { x: 845, name: 'NOT RECOMMENDED', values: [6, 5, 4, 3, 10, 11, 12] }
];

const chart = document.getElementById('chart');
const base = 665, unit = 38.4, bw = 23;

const defs = draw(chart, 'defs', {});
const blur = draw(defs, 'filter', { id: 'soft', x: '-50%', y: '-50%', width: '200%', height: '200%' });
draw(blur, 'feGaussianBlur', { stdDeviation: 3 });

draw(chart, 'rect', { x: 389.5, y: 176.5, width: 888, height: 557, fill: '#404040', stroke: '#7f7f7f' });
draw(chart, 'path', { d: 'M429 670L449 655H1252L1232 670z', fill: '#4f4d4d' });

for (let i = 0; i <= 12; i += 2) {
  draw(chart, 'text', { x: 418, y: 673 - i * 38.25, class: 'axis right' }, i);
}

for (const g of groups) {
  g.values.forEach((value, i) => {
    const [front, edge, side, top] = series[i];
    const x = g.x + i * bw;
    const y = Math.round(base - value * unit);
    draw(chart, 'path', { d: `M${x} ${y}l7-6h${bw}l-7 6z`, fill: top, stroke: edge });
    draw(chart, 'path', { d: `M${x + bw} ${y}l7-6V${base - 6}l-7 6z`, fill: side, stroke: edge });
    draw(chart, 'rect', { x: x + 0.5, y: y + 0.5, width: bw - 1, height: base - y - 1, fill: front, stroke: edge });
    draw(chart, 'rect', { x: x + 1, y: y + 1, width: 7, height: base - y - 6, fill: '#fff', opacity: 0.06 });
  });
  g.values.forEach((value, i) => {
    const x = g.x + i * bw + 11;
    const y = Math.round(base - value * unit) - 22;
    const w = value > 9 ? 20 : 14;
    draw(chart, 'rect', { x: x - w / 2 + 6, y: y + 5, width: w, height: 18, fill: '#000', opacity: 0.3, filter: 'url(#soft)' });
    draw(chart, 'rect', { x: x - w / 2 + 0.5, y: y + 0.5, width: w, height: 18, fill: series[i][4], stroke: '#b0b0b0' });
    draw(chart, 'text', { x: x + 1, y: y + 14, class: 'val' }, value);
  });
  draw(chart, 'text', { x: g.x + 86, y: 688, class: 'axis mid' }, g.name);
}

series.forEach((s, i) => {
  const x = 601 + i * 60;
  draw(chart, 'rect', { x: x + 0.5, y: 709.5, width: 6, height: 7, fill: s[0], stroke: s[1] });
  draw(chart, 'text', { x: x + 10, y: 717, class: 'axis' }, 'Series ' + (i + 1));
});
```
